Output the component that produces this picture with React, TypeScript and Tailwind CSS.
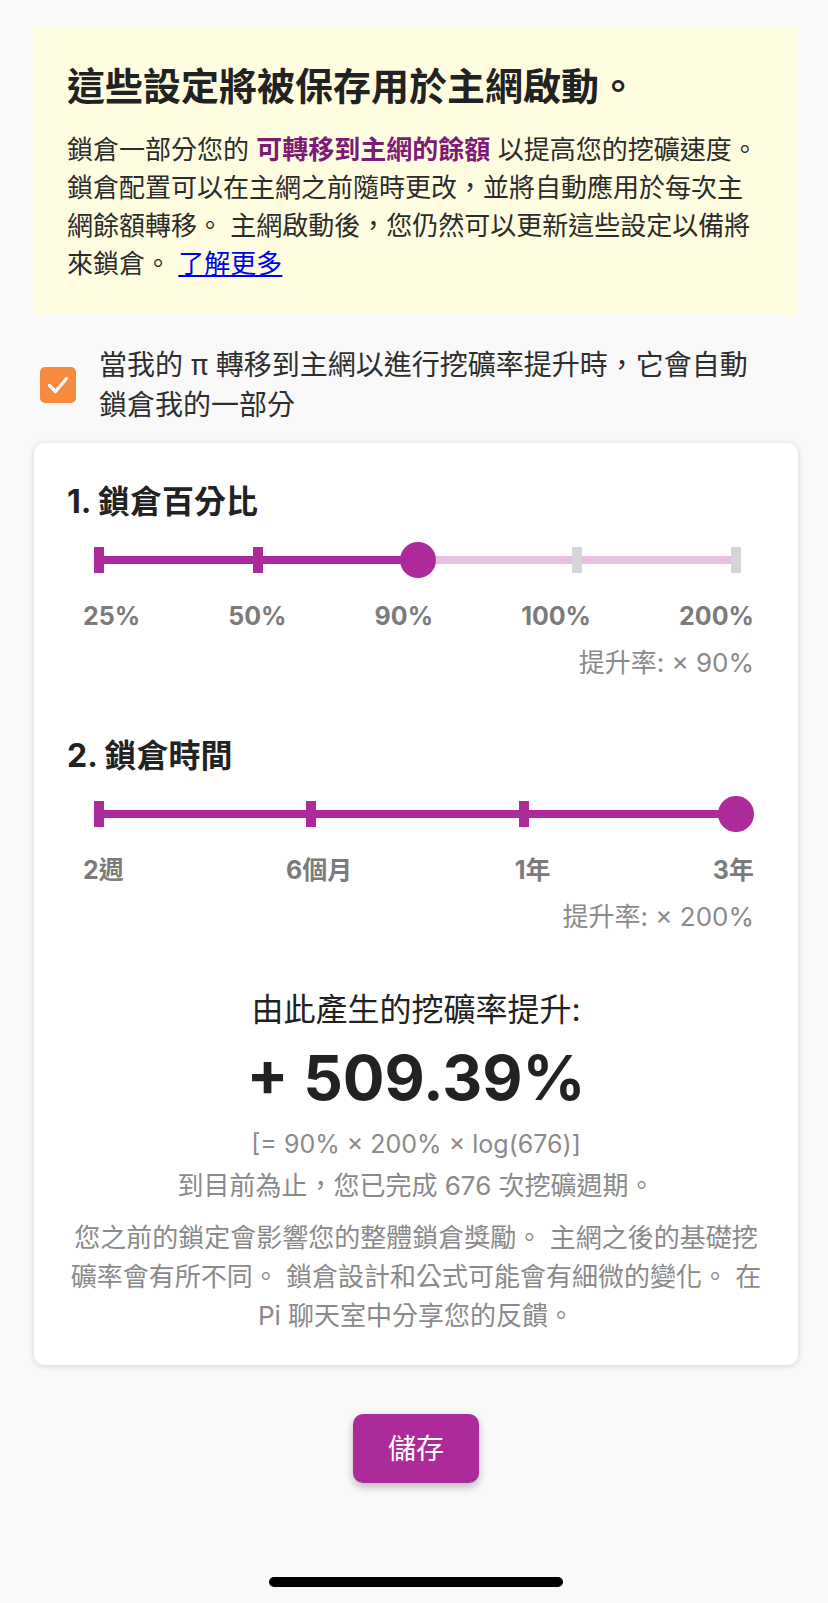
import React from 'react'

function Slider({ count, active }: { count: number; active: number }) {
  const pct = (i: number) => (i / (count - 1)) * 100

  return (
    <div className="pl-8 pr-[29px]">
      <div className="relative h-9">
        <div className="absolute left-0 right-0 top-1/2 h-2 -translate-y-1/2 bg-[#e6bfe1]"></div>
        <div
          className="absolute left-0 top-1/2 h-2 -translate-y-1/2 bg-[#ad2a9a]"
          style={{ width: `${pct(active)}%` }}
        ></div>
        {Array.from({ length: count }).map((_, i) => (
          <div
            key={i}
            className={
              i <= active
                ? 'absolute top-1/2 h-[26px] w-[10px] -translate-x-1/2 -translate-y-1/2 bg-[#ad2a9a]'
                : 'absolute top-1/2 h-[26px] w-[10px] -translate-x-1/2 -translate-y-1/2 bg-[#d6d6d6]'
            }
            style={{ left: `${pct(i)}%` }}
          ></div>
        ))}
        <div
          className="absolute top-1/2 h-9 w-9 -translate-x-1/2 -translate-y-1/2 rounded-full bg-[#ad2a9a]"
          style={{ left: `${pct(active)}%` }}
        ></div>
      </div>
    </div>
  )
}

function Section({
  title,
  labels,
  active,
  rate,
}: {
  title: string
  labels: string[]
  active: number
  rate: string
}) {
  return (
    <div>
      <h2 className="text-[32px] leading-[44px] font-bold text-[#222]">{title}</h2>
      <div className="mt-[18px]">
        <Slider count={labels.length} active={active} />
      </div>
      <div className="mt-5 flex justify-between pl-4 pr-[11px] text-[25px] leading-9 font-bold text-[#7b7b7b]">
        {labels.map((l) => (
          <span key={l}>{l}</span>
        ))}
      </div>
      <p className="mt-[11px] pr-[11px] text-right text-[26px] leading-9 text-[#8a8a8a]">{rate}</p>
    </div>
  )
}

export default function App() {
  return (
    <div className="min-h-[1603px] bg-[#f9f9f9] pt-[28px] pl-[34px] pr-[30px] font-[Inter,'Noto_Sans_CJK_TC',sans-serif] flex flex-col">
      {/* notice */}
      <div className="bg-[#fffddf] pt-[34px] pb-[31px] px-[33px]">
        <h1 className="text-[38px] leading-[48px] font-bold text-[#222]">
          這些設定將被保存用於主網啟動。
        </h1>
        <p className="mt-[21px] text-[26px] leading-[38px] text-[#2b2b2b] whitespace-nowrap">
          鎖倉一部分您的 <span className="font-bold text-[#7d1a76]">可轉移到主網的餘額</span> 以提高您的挖礦速度。
          <br />
          鎖倉配置可以在主網之前隨時更改，並將自動應用於每次主
          <br />
          網餘額轉移。 主網啟動後，您仍然可以更新這些設定以備將
          <br />
          來鎖倉。 <a href="#" className="text-[#0000ee] underline">了解更多</a>
        </p>
      </div>

      {/* auto lock checkbox */}
      <label className="mt-[31px] flex items-center gap-[23px] pl-[6px]">
        <span className="flex h-9 w-9 shrink-0 items-center justify-center rounded-[5px] bg-[#f68a3e]">
          <svg width="26" height="26" viewBox="0 0 26 26" fill="none">
            <path d="M4.5 13.5 L10.5 19.5 L21.5 6.5" stroke="white" strokeWidth="3.2" strokeLinecap="round" strokeLinejoin="round" />
          </svg>
        </span>
        <span className="text-[28px] leading-[40px] text-[#2e2e2e] whitespace-nowrap">
          當我的 π 轉移到主網以進行挖礦率提升時，它會自動
          <br />
          鎖倉我的一部分
        </span>
      </label>

      {/* lock settings card */}
      <div className="mt-[18px] rounded-[10px] bg-white pt-[37px] pb-[30px] px-[33px] shadow-[0_1px_6px_rgba(0,0,0,0.16)]">
        <Section title="1. 鎖倉百分比" labels={['25%', '50%', '90%', '100%', '200%']} active={2} rate="提升率: × 90%" />
        <div className="mt-[53px]">
          <Section title="2. 鎖倉時間" labels={['2週', '6個月', '1年', '3年']} active={3} rate="提升率: × 200%" />
        </div>

        <div className="mt-[53px] flex flex-col items-center text-center">
          <p className="text-[32px] leading-[44px] text-[#222]">由此產生的挖礦率提升:</p>
          <p className="mt-[6px] text-[62px] leading-[80px] font-bold text-[#222]">+ 509.39%</p>
          <p className="mt-[6px] text-[25px] leading-[41px] text-[#8a8a8a]">[= 90% × 200% × log(676)]</p>
          <p className="text-[26px] leading-[41px] text-[#8a8a8a]">到目前為止，您已完成 676 次挖礦週期。</p>
          <p className="mt-3 text-[26px] leading-[39px] text-[#8a8a8a] whitespace-nowrap">
            您之前的鎖定會影響您的整體鎖倉獎勵。 主網之後的基礎挖
            <br />
            礦率會有所不同。 鎖倉設計和公式可能會有細微的變化。 在
            <br />
            Pi 聊天室中分享您的反饋。
          </p>
        </div>
      </div>

      {/* save */}
      <div className="mt-[49px] flex justify-center">
        <button className="h-[69px] w-[126px] rounded-[10px] bg-[#ad2a9a] text-[28px] text-white shadow-[0_4px_8px_rgba(0,0,0,0.25)]">
          儲存
        </button>
      </div>

      <div className="mt-auto mb-4 flex justify-center">
        <div className="h-[10px] w-[294px] rounded-full bg-black"></div>
      </div>
    </div>
  )
}
